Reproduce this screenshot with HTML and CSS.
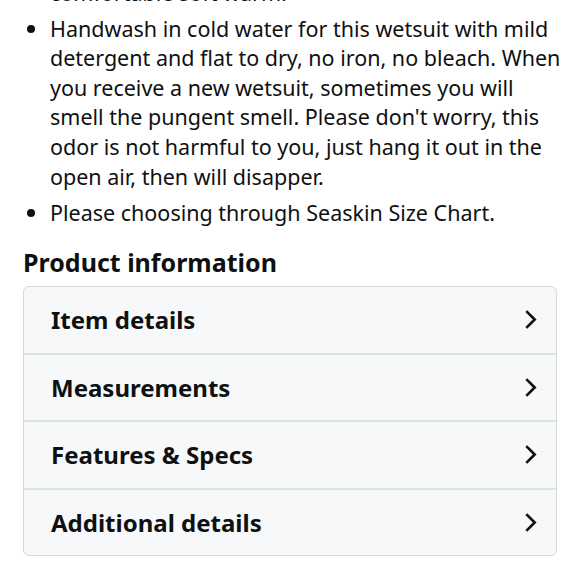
FILE: index.html
```html
<!DOCTYPE html>
<html lang="en">
<head>
<meta charset="utf-8">
<title>Product information</title>
<link rel="stylesheet" href="styles.css">
</head>
<body>
<div class="page">
  <ul class="bullets">
    <li>Made of premium neoprene, stretchy and elastic, comfortable soft warm.</li>
    <li>Handwash in cold water for this wetsuit with mild detergent and flat to dry, no iron, no bleach. When you receive a new wetsuit, sometimes you will smell the pungent smell. Please don't worry, this odor is not harmful to you, just hang it out in the open air, then will disapper.</li>
    <li>Please choosing through Seaskin Size Chart.</li>
  </ul>
  <h2 class="heading">Product information</h2>
  <div class="card">
    <div class="row"><span>Item details</span><svg class="chev" viewBox="0 0 14 20"><path d="M3 2 L11 10 L3 18"/></svg></div>
    <div class="row"><span>Measurements</span><svg class="chev" viewBox="0 0 14 20"><path d="M3 2 L11 10 L3 18"/></svg></div>
    <div class="row"><span>Features &amp; Specs</span><svg class="chev" viewBox="0 0 14 20"><path d="M3 2 L11 10 L3 18"/></svg></div>
    <div class="row"><span>Additional details</span><svg class="chev" viewBox="0 0 14 20"><path d="M3 2 L11 10 L3 18"/></svg></div>
  </div>
</div>
</body>
</html>
```
FILE: styles.css
```css
html, body {
  margin: 0;
  padding: 0;
  background: #ffffff;
}
body {
  font-family: "Noto Sans", "Liberation Sans", sans-serif;
  color: #0f1111;
  overflow: hidden;
  height: 580px;
}
.page {
  margin-top: -52px;
  padding: 0 23px;
}
.bullets {
  margin: 0 -10px 0 0;
  padding: 0 0 0 27px;
  list-style: none;
}
.bullets li {
  position: relative;
  font-size: 21.5px;
  line-height: 29.6px;
  margin-bottom: 6.4px;
}
.bullets li::before {
  content: "";
  position: absolute;
  left: -23px;
  top: 11px;
  width: 8px;
  height: 8px;
  border-radius: 50%;
  background: #0f1111;
}
.heading {
  margin: 18px 0 0;
  font-size: 25px;
  line-height: 34px;
  font-weight: 700;
}
.card {
  margin-top: 7px;
  border: 1px solid #d5d9d9;
  border-radius: 6px;
  background: #f7f8fa;
  overflow: hidden;
}
.row {
  display: flex;
  align-items: center;
  justify-content: space-between;
  height: 65.5px;
  padding: 0 18px 0 27px;
  font-size: 24px;
  font-weight: 700;
}
.row + .row {
  border-top: 2.5px solid #dfe2e3;
}
.chev {
  width: 15px;
  height: 21px;
  fill: none;
  stroke: #0f1111;
  stroke-width: 2.5;
}
```
